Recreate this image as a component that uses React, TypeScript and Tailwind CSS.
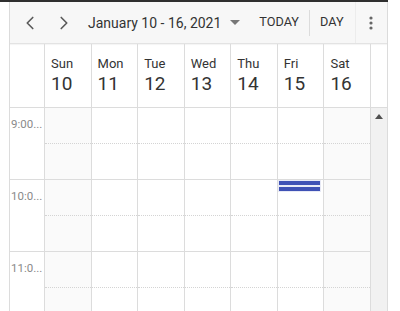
import React from "react";
import { ChevronLeft, ChevronRight } from "lucide-react";

const days = [
  { n: "Sun", d: 10, w: true },
  { n: "Mon", d: 11 },
  { n: "Tue", d: 12 },
  { n: "Wed", d: 13 },
  { n: "Thu", d: 14 },
  { n: "Fri", d: 15 },
  { n: "Sat", d: 16, w: true },
];

const hours = ["9:00...", "10:0...", "11:0..."];

export default function App() {
  return (
    <div
      className="w-[400px] h-[311px] overflow-hidden bg-white text-[#333]"
      style={{ fontFamily: "Roboto, 'Liberation Sans', sans-serif" }}
    >
      <div className="h-[2px] w-[388px] bg-[#2f2f2f]" />
      <div className="ml-[9px] w-[379px] h-[309px] border-x border-[#dcdcdc] flex flex-col">
        {/* toolbar */}
        <div className="h-[42px] shrink-0 bg-[#f7f7f7] border-b border-[#e3e3e3] shadow-[0_1px_1px_rgba(0,0,0,0.04)] flex items-center">
          <div className="w-[22px] ml-[9px] flex justify-center">
            <ChevronLeft size={24} strokeWidth={1.8} color="#5a5a5a" />
          </div>
          <div className="w-[22px] ml-[12px] flex justify-center">
            <ChevronRight size={24} strokeWidth={1.8} color="#5a5a5a" />
          </div>
          <div className="ml-[13px] text-[14px] leading-none text-[#333] whitespace-nowrap">
            January 10 - 16, 2021
          </div>
          <svg width="10" height="6" viewBox="0 0 10 6" className="ml-[9px] mt-[1px]">
            <path d="M0 0 L10 0 L5 5 Z" fill="#777" />
          </svg>
          <div className="ml-[19px] text-[12.7px] leading-none">TODAY</div>
          <div className="ml-[10px] w-px h-[26px] bg-[#dcdcdc]" />
          <div className="ml-[10px] text-[12.7px] leading-none">DAY</div>
          <div className="ml-[11px] w-px self-stretch bg-[#ececec]" />
          <div className="flex-1 flex justify-center">
            <svg width="4" height="14" viewBox="0 0 4 14">
              <circle cx="2" cy="2" r="1.6" fill="#666" />
              <circle cx="2" cy="7" r="1.6" fill="#666" />
              <circle cx="2" cy="12" r="1.6" fill="#666" />
            </svg>
          </div>
        </div>
        {/* header */}
        <div className="h-[64px] shrink-0 flex border-b border-[#dcdcdc]">
          <div className="w-[35px] border-r border-[#dcdcdc]" />
          <div className="w-[326px] grid grid-cols-7">
            {days.map((d) => (
              <div key={d.n} className="border-r border-[#dcdcdc] pl-[6px] pt-[12px]">
                <div className="text-[13px] leading-[15px]">{d.n}</div>
                <div className="text-[19px] leading-[22px] mt-[2px]">{d.d}</div>
              </div>
            ))}
          </div>
          <div className="flex-1" />
        </div>
        {/* body */}
        <div className="flex flex-1 overflow-hidden">
          <div className="w-[35px] shrink-0 border-r border-[#dcdcdc]">
            {hours.map((h) => (
              <div key={h} className="h-[72px] border-b border-[#dcdcdc] pt-[9px] pl-[1px]">
                <div className="text-[11.5px] leading-[14px] text-[#8a8a8a] whitespace-nowrap">
                  {h}
                </div>
              </div>
            ))}
          </div>
          <div className="w-[326px] shrink-0 grid grid-cols-7 content-start">
            {days.map((d, di) => (
              <div
                key={d.n}
                className={`border-r border-[#dcdcdc] ${d.w ? "bg-[#fafafa]" : "bg-white"}`}
              >
                {hours.map((h, hi) => (
                  <div key={h} className="relative h-[72px] border-b border-[#dcdcdc]">
                    <div className="h-[36px] border-b border-dotted border-[#d4d4d4]" />
                    {di === 5 && hi === 1 && (
                      <div className="absolute left-0 top-[0px] w-[43px] flex flex-col">
                        <div className="h-[6px] bg-[#3f51b5] border border-[#e8eaf6]" />
                        <div className="h-[6px] bg-[#3f51b5] border border-[#e8eaf6]" />
                      </div>
                    )}
                  </div>
                ))}
              </div>
            ))}
          </div>
          <div className="flex-1 bg-[#f1f1f1] flex justify-center pt-[6px]">
            <svg width="8" height="5" viewBox="0 0 8 5">
              <path d="M0 5 L4 0 L8 5 Z" fill="#505050" />
            </svg>
          </div>
        </div>
      </div>
    </div>
  );
}
